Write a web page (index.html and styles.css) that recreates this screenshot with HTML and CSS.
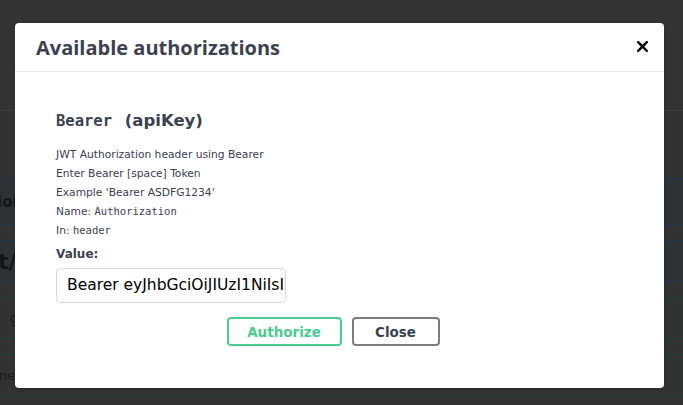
FILE: index.html
```html
<!DOCTYPE html>
<html>
<head>
<meta charset="utf-8">
<link rel="stylesheet" href="styles.css">
</head>
<body>
<div class="backdrop">
  <div class="topbar"></div>
  <div class="spacer s1"></div>
  <div class="band blue b1"><span class="t1">ion</span></div>
  <div class="spacer s2"></div>
  <div class="band blue b2"><span class="t2">t/</span></div>
  <div class="spacer s2"></div>
  <div class="band green b3"><span class="t3">g</span></div>
  <div class="spacer s2"></div>
  <div class="band green b4"><span class="t4">ne</span></div>
</div>

<div class="modal">
  <div class="modal-header">
    <h3 class="modal-title">Available authorizations</h3>
    <span class="close-x">
      <svg width="11" height="11" viewBox="0 0 11 11"><path d="M1.2 1.2 L9.8 9.8 M9.8 1.2 L1.2 9.8" stroke="#000" stroke-width="2.4" stroke-linecap="square"/></svg>
    </span>
  </div>
  <div class="modal-body">
    <h4 class="scheme"><code>Bearer</code>&nbsp;(apiKey)</h4>
    <div class="desc">
      <p>JWT Authorization header using Bearer</p>
      <p>Enter Bearer [space] Token</p>
      <p>Example 'Bearer ASDFG1234'</p>
      <p>Name: <code>Authorization</code></p>
      <p>In: <code>header</code></p>
    </div>
    <label class="value-label">Value:</label>
    <div class="input">Bearer eyJhbGciOiJIUzI1NiIsInR5cCI6IkpXVCJ9</div>
    <div class="btn-row">
      <button class="btn authorize">Authorize</button>
      <button class="btn close">Close</button>
    </div>
  </div>
</div>
</body>
</html>
```
FILE: styles.css
```css
html, body {
  margin: 0;
  padding: 0;
}
body {
  width: 683px;
  height: 405px;
  overflow: hidden;
  position: relative;
  background: #323232;
  font-family: "DejaVu Sans", Verdana, sans-serif;
}
.backdrop {
  display: flex;
  flex-direction: column;
}
.topbar {
  height: 110px;
  background: #333333;
  border-bottom: 1px solid #3c3c3c;
}
.s1 { height: 67px; }
.s2 { height: 15px; }
.band {
  height: 40px;
  display: flex;
  align-items: center;
  color: #111;
  overflow: hidden;
  white-space: nowrap;
}
.blue { border-top: 1px solid #1f3a52; border-bottom: 1px solid #1f3a52; background: #2f3235; }
.green { border-top: 1px solid #1d4433; border-bottom: 1px solid #1d4433; background: #303331; }
.b1 { height: 45px; }
.t1 { font-weight: bold; font-size: 15px; margin-left: -3px; color: #121417; }
.t2 { font-weight: bold; font-size: 22px; margin-left: -2px; color: #121417; }
.t3 { font-size: 14px; margin-left: 10px; color: #1a1a1a; }
.t4 { font-size: 13px; margin-left: -1px; color: #1a1a1a; }

.modal {
  position: absolute;
  left: 15px;
  top: 23px;
  width: 649px;
  height: 365px;
  background: #fff;
  border-radius: 4px;
  box-shadow: 0 1px 3px rgba(0,0,0,0.2);
  color: #3b4151;
}
.modal-header {
  height: 48px;
  border-bottom: 1px solid #e8e8e8;
  display: flex;
  align-items: center;
  justify-content: space-between;
  padding: 0 16px 0 21px;
}
.modal-title {
  margin: 0;
  font-size: 20px;
  font-weight: bold;
  color: #3b4151;
  font-family: "Open Sans", "DejaVu Sans", sans-serif;
}
.close-x { display: flex; margin-top: -2px; }
.modal-body {
  padding: 39px 40px 0 41px;
}
.scheme {
  margin: 0 0 14px 0;
  font-family: "DejaVu Sans", sans-serif;
  font-size: 16.5px;
  font-weight: bold;
  color: #3b4151;
  line-height: 20px;
}
.scheme code {
  font-family: "DejaVu Sans Mono", monospace;
  font-size: 15.5px;
  font-weight: bold;
  margin-right: 7px;
}
.desc p {
  margin: 0;
  font-size: 10.7px;
  line-height: 19px;
  color: #3b4151;
}
.desc code {
  font-family: "DejaVu Sans Mono", monospace;
  font-size: 10.5px;
}
.value-label {
  display: block;
  font-size: 12px;
  font-weight: bold;
  margin-top: 6px;
  line-height: 16px;
}
.input {
  margin-top: 6px;
  width: 208px;
  height: 33px;
  border: 1px solid #d9d9d9;
  border-radius: 4px;
  padding: 0 10px;
  font-size: 15.5px;
  line-height: 33px;
  color: #000;
  overflow: hidden;
  white-space: nowrap;
}
.btn-row {
  display: flex;
  justify-content: center;
  gap: 10px;
  margin-top: 14px;
  padding-right: 14px;
}
.btn {
  height: 29px;
  border-radius: 4px;
  background: #fff;
  font-family: "DejaVu Sans", sans-serif;
  font-size: 13.5px;
  font-weight: bold;
  padding: 0;
  box-sizing: border-box;
}
.authorize {
  width: 115px;
  border: 2px solid #49cc90;
  color: #49cc90;
}
.close {
  width: 88px;
  border: 2px solid #7d7d7d;
  color: #3b4151;
}
```
